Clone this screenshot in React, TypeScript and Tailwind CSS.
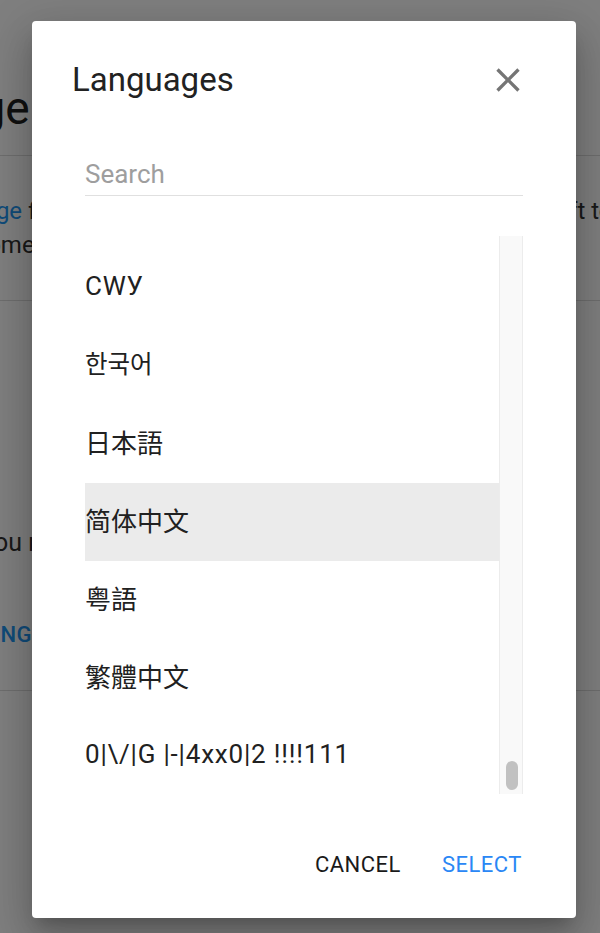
import React from "react";

type Item = { label: string; cls: string; selected?: boolean };

const items: Item[] = [
  { label: "Tiếng Việt", cls: "font-[Roboto,sans-serif] text-[26px] tracking-[0.8px] pb-[3px]" },
  { label: "СWУ", cls: "font-[Roboto,sans-serif] text-[26px] tracking-[0.8px] pb-[3px]" },
  { label: "한국어", cls: "font-['Noto_Sans_CJK_KR',sans-serif] text-[24.5px] pb-[6px]" },
  { label: "日本語", cls: "font-['Noto_Sans_CJK_JP',sans-serif] text-[26px] pb-[6px]" },
  { label: "简体中文", cls: "font-['Noto_Sans_CJK_SC',sans-serif] text-[26px] pb-[6px]", selected: true },
  { label: "粤語", cls: "font-['Noto_Sans_CJK_TC',sans-serif] text-[26px] pb-[6px]" },
  { label: "繁體中文", cls: "font-['Noto_Sans_CJK_TC',sans-serif] text-[26px] pb-[6px]" },
  { label: "0|\\/|G |-|4xx0|2 !!!!111", cls: "font-[Roboto,sans-serif] text-[26px] tracking-[0.8px] pb-[3px]" },
];

function CloseIcon() {
  return (
    <svg viewBox="0 0 24 24" className="h-[40px] w-[40px] fill-[#757575]">
      <path d="M19 6.41L17.59 5 12 10.59 6.41 5 5 6.41 10.59 12 5 17.59 6.41 19 12 13.41 17.59 19 19 17.59 13.41 12z" />
    </svg>
  );
}

export default function App() {
  return (
    <div className="relative h-[933px] w-[600px] overflow-hidden bg-white font-[Roboto,sans-serif]">
      {/* underlying page */}
      <div className="ml-[-172px] w-[960px] text-[#212121]">
        <div className="h-[155px] pt-[81px]">
          <h1 className="whitespace-nowrap text-[46px] leading-[54px]">Language</h1>
        </div>
        <div className="ml-[3px] border-t border-[#dddddd] pb-[38px] pt-[38px] text-[24px] leading-[34px] text-[#333333]">
          <p className="whitespace-nowrap">
            Set your <span className="text-[#2196f3]">language</span> for the whole app, or choose one and then select left to right
          </p>
          <p className="whitespace-nowrap">in your apps. Some items may not be translated yet.</p>
        </div>
        <div className="ml-[3px] h-[390px] border-t border-[#dddddd] pt-[225px] text-[25px] leading-[34px] text-[#333333]">
          <p className="whitespace-nowrap pl-[4px]">It will reset if you make a change</p>
          <div className="mt-[58px] whitespace-nowrap pl-[11px] text-[22px] font-medium leading-[34px] tracking-[0.5px] text-[#2196f3]">
            CHANGE SETTING
          </div>
        </div>
        <div className="border-t border-[#dddddd]" />
      </div>

      {/* overlay */}
      <div className="absolute inset-0 bg-black/50 pl-[32px] pt-[21px]">
        <div className="flex h-[897px] w-[544px] flex-col rounded-[4px] bg-white shadow-[0_11px_15px_-7px_rgba(0,0,0,0.2),0_24px_38px_3px_rgba(0,0,0,0.14),0_9px_46px_8px_rgba(0,0,0,0.12)]">
          <div className="mt-[39px] flex h-[40px] items-center justify-between pl-[40px] pr-[48px]">
            <h2 className="text-[33px] leading-[40px] text-[#222222]">Languages</h2>
            <button className="flex h-[40px] w-[40px] items-center justify-center">
              <CloseIcon />
            </button>
          </div>

          <div className="mx-[53px] mt-[59px] border-b border-[#e0e0e0] pb-[5px]">
            <input
              placeholder="Search"
              className="h-[31px] w-full bg-transparent text-[26px] leading-[31px] text-[#212121] outline-none placeholder:text-[#9e9e9e]"
            />
          </div>

          <div className="mx-[53px] mt-[40px] flex h-[559px] overflow-hidden">
            <div className="flex-1 overflow-hidden">
              <div className="-mt-[65px]">
                {items.map((it) => (
                  <div
                    key={it.label}
                    className={
                      "flex h-[78px] items-center whitespace-nowrap text-[#212121] " +
                      (it.selected ? "bg-[#ebebeb] " : "") +
                      it.cls
                    }
                  >
                    <span>{it.label}</span>
                  </div>
                ))}
              </div>
            </div>
            <div className="relative h-[558px] w-[24px] border-x border-[#ececec] bg-[#f9f9f9]">
              <div className="absolute bottom-[4px] left-[6px] h-[29px] w-[12px] rounded-full bg-[#c1c1c1]" />
            </div>
          </div>

          <div className="mb-[30px] mt-auto flex h-[48px] items-center justify-end gap-[41px] pr-[54px] text-[22px] tracking-[0.5px]">
            <button className="text-[#1a1a1a]">CANCEL</button>
            <button className="text-[#2a87f5]">SELECT</button>
          </div>
        </div>
      </div>
    </div>
  );
}
